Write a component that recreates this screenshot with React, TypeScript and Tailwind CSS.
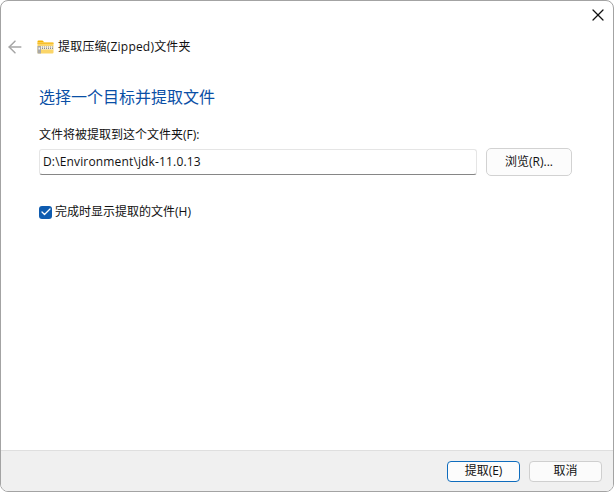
import React from 'react';
import { ArrowLeft, Check, X } from 'lucide-react';

const FolderZip = () => (
  <svg width="17" height="14" viewBox="0 0 17 14">
    <path d="M0.5 1.5a1 1 0 0 1 1-1h4l2 2h-7z" fill="#f5b400" />
    <rect x="0.5" y="2.5" width="16" height="11" rx="1" fill="#fbd568" />
    <rect x="0.5" y="2.5" width="16" height="1.5" fill="#f7bf2d" />
    <rect x="3" y="6" width="13.5" height="3.5" fill="#f4efe0" />
    <path d="M3 7h13.5M3 8.5h13.5" stroke="#8d8d8d" strokeWidth="1" strokeDasharray="1 1" />
    <rect x="0.5" y="6" width="3.5" height="7.5" fill="#a8a8a8" />
    <rect x="1.5" y="7.5" width="1.5" height="2" fill="#f2f2f2" />
  </svg>
);

const App: React.FC = () => {
  const font = { fontFamily: '"Open Sans", "Noto Sans CJK SC", sans-serif' };

  return (
    <div className="w-[614px] h-[492px] bg-white overflow-hidden text-[12px] text-[#111111]" style={font}>
      <div className="h-full flex flex-col border border-[#a3a3a3] rounded-lg overflow-hidden">
        {/* Title bar */}
        <div className="h-[30px] flex justify-end items-start pt-[4px] pr-[5px] shrink-0">
          <X className="w-[20px] h-[20px] text-[#111111]" strokeWidth={1.5} />
        </div>

        {/* Header */}
        <div className="flex items-center h-[32px] pl-[4px] shrink-0">
          <ArrowLeft className="w-[20px] h-[20px] text-[#a6a6a6]" strokeWidth={1.8} />
          <div className="ml-[12px]">
            <FolderZip />
          </div>
          <span className="ml-[4px] leading-[16px] tracking-[0.2px]">提取压缩(Zipped)文件夹</span>
        </div>

        {/* Content */}
        <div className="flex-1 pl-[38px] pr-[41px]">
          <h1 className="mt-[22px] text-[16px] leading-[24px] font-normal text-[#0a4fa6]">选择一个目标并提取文件</h1>

          <label className="block mt-[18px] leading-[16px]">文件将被提取到这个文件夹(F):</label>

          <div className="flex items-center gap-[9px] mt-[5px]">
            <div className="flex-1 h-[26px] flex items-center pl-[3px] tracking-[0.15px] bg-white border border-[#e5e5e5] border-b-[#868686] rounded-[3px]">
              D:\Environment\jdk-11.0.13
            </div>
            <button className="w-[86px] h-[28px] bg-[#fcfcfc] border border-[#d2d2d2] rounded-[5px]">浏览(R)...</button>
          </div>

          <label className="flex items-center gap-[3px] mt-[28px]">
            <span className="w-[13px] h-[13px] rounded-[3px] bg-[#0f5cb0] flex items-center justify-center">
              <Check className="w-[12px] h-[12px] text-white" strokeWidth={2.5} />
            </span>
            <span className="leading-[16px]">完成时显示提取的文件(H)</span>
          </label>
        </div>

        {/* Footer */}
        <div className="h-[41px] shrink-0 flex items-center justify-end gap-[9px] pr-[11px] bg-[#f0f0f0] border-t border-[#dfdfdf]">
          <button className="w-[73px] h-[21px] bg-[#fcfcfc] border border-[#0f6cbd] rounded-[4px]">提取(E)</button>
          <button className="w-[73px] h-[21px] bg-[#fbfbfb] border border-[#cfcfcf] rounded-[4px]">取消</button>
        </div>
      </div>
    </div>
  );
};

export default App;
